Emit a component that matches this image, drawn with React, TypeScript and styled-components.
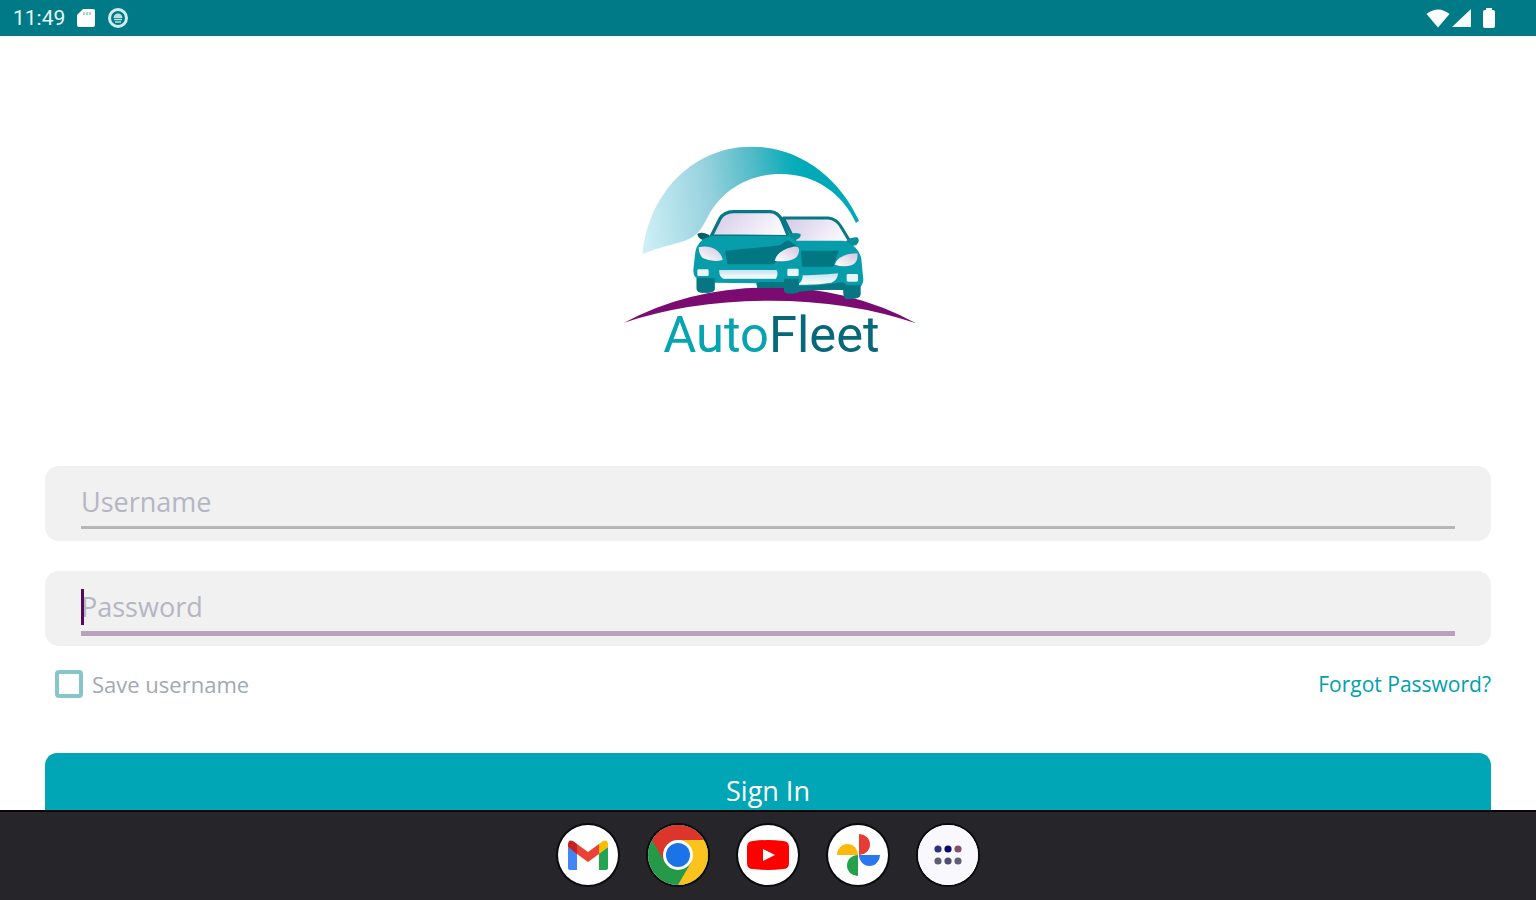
import React, { useState } from "react";
import styled, { createGlobalStyle } from "styled-components";

const GlobalStyle = createGlobalStyle`
  *, *::before, *::after { box-sizing: border-box; }
  body { margin: 0; background: #ffffff; font-family: "Open Sans", "Noto Sans", sans-serif; }
`;

const Screen = styled.div`
  display: flex;
  flex-direction: column;
  height: 100vh;
  overflow: hidden;
`;

const StatusBar = styled.header`
  display: flex;
  align-items: center;
  justify-content: space-between;
  flex: none;
  height: 36px;
  padding: 0 40px 0 13px;
  background: #007a87;
  color: #e6f6f7;
  font: 400 21px/24px Roboto, sans-serif;
`;

const StatusGroup = styled.div<{ $gap: number }>`
  display: flex;
  align-items: center;
  gap: ${(p) => p.$gap}px;
  svg { display: block; }
`;

const Page = styled.main`
  flex: 1;
  min-height: 0;
  overflow: hidden;
  padding: 94px 45px 0;
`;

const Logo = styled.svg`
  display: block;
  width: 320px;
  height: 240px;
  margin: 0 auto 96px;
`;

const Form = styled.form`
  display: flex;
  flex-direction: column;
`;

const Field = styled.div`
  height: 75px;
  margin-bottom: 30px;
  padding: 16px 36px 0;
  border-radius: 14px;
  background: #f1f1f1;
  &:nth-of-type(2) { margin-bottom: 24px; }
`;

const InputLine = styled.div<{ $active?: boolean }>`
  position: relative;
  height: ${(p) => (p.$active ? 49 : 47)}px;
  border-bottom: ${(p) => (p.$active ? "5px solid #b8a2bb" : "3px solid #b7b7b9")};
`;

const Caret = styled.span`
  position: absolute;
  left: 0;
  top: 2px;
  width: 3px;
  height: 36px;
  background: #560a5c;
`;

const TextInput = styled.input`
  display: block;
  width: 100%;
  height: 40px;
  padding: 0;
  border: 0;
  outline: 0;
  background: transparent;
  color: #3c3c4c;
  font: 400 27px/40px "Open Sans", sans-serif;
  &::placeholder { color: #b4b6c3; opacity: 1; }
`;

const Options = styled.div`
  display: flex;
  align-items: center;
  justify-content: space-between;
  height: 28px;
  margin-bottom: 55px;
  padding-left: 10px;
`;

const CheckLabel = styled.label`
  display: flex;
  align-items: center;
  gap: 9px;
  color: #a3a7b8;
  font: 400 22px/28px "Open Sans", sans-serif;
`;

const CheckBox = styled.input`
  appearance: none;
  width: 28px;
  height: 28px;
  margin: 0;
  border: 4px solid #86c5ca;
  border-radius: 4px;
  background: #ffffff;
  &:checked { background: #00a6b6; }
`;

const ForgotLink = styled.a`
  color: #00a0ae;
  font: 400 21px/28px "Open Sans", sans-serif;
  text-decoration: none;
`;

const SignInButton = styled.button`
  height: 76px;
  padding: 0;
  border: 0;
  border-radius: 12px;
  background: #00a6b6;
  color: #ffffff;
  font: 400 27px/36px "Open Sans", sans-serif;
`;

const Dock = styled.nav`
  display: flex;
  align-items: center;
  justify-content: center;
  gap: 30px;
  flex: none;
  height: 90px;
  background: #26252a;
  box-shadow: inset 0 2px 0 #0c0506;
`;

const DockButton = styled.button`
  width: 60px;
  height: 60px;
  padding: 0;
  border: 0;
  border-radius: 50%;
  background: #ffffff;
  box-shadow: 0 0 0 2px #0b0b0d;
  overflow: hidden;
  svg { display: block; width: 60px; height: 60px; }
`;

function AutoFleetLogo() {
  return (
    <Logo viewBox="-6 0 960 720" role="img" aria-label="AutoFleet">
      <defs>
        <linearGradient id="swoosh" x1="98" y1="260" x2="600" y2="200" gradientUnits="userSpaceOnUse">
          <stop offset="0" stopColor="#cdeef5" />
          <stop offset="0.4" stopColor="#97d2de" />
          <stop offset="0.7" stopColor="#4dbac6" />
          <stop offset="0.9" stopColor="#0dadbb" />
          <stop offset="1" stopColor="#00a9b8" />
        </linearGradient>
        <linearGradient id="glass" x1="0" y1="0" x2="1" y2="0.3">
          <stop offset="0" stopColor="#d3c9e6" />
          <stop offset="1" stopColor="#faf8fd" />
        </linearGradient>
        <linearGradient id="lamp" x1="0" y1="1" x2="1" y2="0">
          <stop offset="0" stopColor="#ffffff" />
          <stop offset="1" stopColor="#d2c5e2" />
        </linearGradient>
        <linearGradient id="bumper" x1="0" y1="0" x2="0" y2="1">
          <stop offset="0" stopColor="#c3e3f0" />
          <stop offset="1" stopColor="#ffffff" />
        </linearGradient>
      </defs>
      <path
        d="M98 372C112 205 236 50 425 50C575 50 690 148 747 272L738 279C698 192 618 132 512 132C415 132 340 180 298 252C272 302 262 318 225 332C178 346 138 354 98 372Z"
        fill="url(#swoosh)"
      />
      <path d="M42 578Q240 472 480 472T918 580Q720 512 480 512T42 578Z" fill="#7b0b70" />

      <path d="M520 264H655Q680 266 694 292L722 338L560 345Z" fill="url(#glass)" stroke="#087783" strokeWidth="9" strokeLinejoin="round" />
      <path d="M704 340Q716 320 742 322Q752 332 740 344L718 352Z" fill="#078d99" />
      <path d="M550 332H700Q748 348 754 388L760 450Q758 468 748 472V496Q746 506 726 506H708Q700 504 700 480L566 478Z" fill="#079daa" />
      <path d="M572 362H686L670 410H572Z" fill="#007783" />
      <path d="M674 404Q684 372 742 370Q746 398 724 406Q700 412 674 404Z" fill="url(#lamp)" />
      <path d="M566 436Q620 436 684 430Q684 450 664 458Q620 466 566 464Z" fill="url(#bumper)" />
      <path d="M560 468Q640 468 698 456L710 466H752V494Q750 506 726 506H708Q700 504 700 480Q630 478 560 486Z" fill="#067682" />
      <rect x="710" y="432" width="34" height="23" rx="4" fill="#e8f6fa" />

      <path d="M304 318L330 266Q342 246 370 245H480Q505 246 516 272L536 320Z" fill="url(#glass)" stroke="#087783" strokeWidth="10" strokeLinejoin="round" />
      <path d="M262 312Q275 304 296 314L308 330H278Q264 326 262 312Z" fill="#075f6b" />
      <path d="M532 316Q550 304 572 312Q576 328 544 334Z" fill="#078d99" />
      <path
        d="M302 318H535Q572 336 574 376L578 435Q578 454 566 462V480Q566 490 550 490H534Q522 490 522 474H442L438 460L314 458V478Q312 488 294 488H276Q260 486 260 476V444Q250 440 250 420L256 366Q262 330 302 318Z"
        fill="#079daa"
      />
      <path d="M345 362Q440 354 510 346L532 330Q562 344 567 360L500 392L492 403H352Z" fill="#007783" />
      <path d="M266 352Q296 344 322 362Q338 378 338 390Q308 398 278 384Q266 372 266 352Z" fill="url(#lamp)" />
      <path d="M494 392Q502 360 550 350Q570 348 567 364Q564 388 534 392Q510 396 494 392Z" fill="url(#lamp)" />
      <path d="M328 420H500Q506 434 498 446H340Q326 438 328 420Z" fill="url(#bumper)" />
      <rect x="262" y="418" width="34" height="20" rx="4" fill="#e8f6fa" />
      <rect x="532" y="416" width="34" height="22" rx="4" fill="#e8f6fa" />
      <path d="M260 444H314V478Q312 488 294 488H276Q260 486 260 476Z" fill="#067682" />
      <path d="M442 456H522V446H566V480Q566 490 550 490H534Q522 490 522 474H442Z" fill="#067682" />

      <text x="160" y="665" fontFamily="Roboto, sans-serif" fontSize="152" fill="#06a3b1">
        Auto<tspan fill="#07687a">Fleet</tspan>
      </text>
    </Logo>
  );
}

function Gmail() {
  return (
    <svg viewBox="0 0 60 60" aria-hidden="true">
      <path d="M10 22L19 28V45H12Q10 45 10 43Z" fill="#4285f4" />
      <path d="M41 28L50 22V43Q50 45 48 45H41Z" fill="#23a455" />
      <path d="M41 19L45 16Q50 14 50 20V22L41 29Z" fill="#fbbc04" />
      <path d="M19 19L30 27L41 19V29L30 37L19 29Z" fill="#ea4335" />
      <path d="M10 22V20Q10 14 15 16L19 19V29Z" fill="#c5221f" />
    </svg>
  );
}

function Chrome() {
  return (
    <svg viewBox="0 0 60 60" aria-hidden="true">
      <rect width="60" height="60" fill="#249a48" />
      <path d="M30 15H60V60H30L43 37.5Z" fill="#fcc31e" />
      <path d="M4 15L0 0H60V15H30L17 37.5Z" fill="#dc362c" />
      <circle cx="30" cy="30" r="15" fill="#ffffff" />
      <circle cx="30" cy="30" r="12" fill="#1b73e8" />
    </svg>
  );
}

function YouTube() {
  return (
    <svg viewBox="0 0 60 60" aria-hidden="true">
      <path d="M15 16Q30 14 45 16Q51 16 51 22V38Q51 44 45 44Q30 46 15 44Q9 44 9 38V22Q9 16 15 16Z" fill="#ff0000" />
      <path d="M25 24L37 30L25 36Z" fill="#ffffff" />
    </svg>
  );
}

function Photos() {
  return (
    <svg viewBox="0 0 60 60" aria-hidden="true">
      <path d="M31 30V9A11 10.5 0 0 1 31 30Z" fill="#e53d35" />
      <path d="M31 30H52A10.5 11 0 0 1 31 30Z" fill="#2a78ee" />
      <path d="M30 30V51A11 10.5 0 0 1 30 30Z" fill="#25a04d" />
      <path d="M30 30H9A10.5 11 0 0 1 30 30Z" fill="#fbb90a" />
    </svg>
  );
}

const APP_DOTS = [
  { x: 20, y: 24, fill: "#2b3478" },
  { x: 30, y: 24, fill: "#0a0870" },
  { x: 40, y: 24, fill: "#80506c" },
  { x: 20, y: 36, fill: "#5d5f78" },
  { x: 30, y: 36, fill: "#4e4f72" },
  { x: 40, y: 36, fill: "#5d5c79" },
];

function AllApps() {
  return (
    <svg viewBox="0 0 60 60" aria-hidden="true">
      <rect width="60" height="60" fill="#f9f8fe" />
      {APP_DOTS.map((d) => (
        <circle key={`${d.x}-${d.y}`} cx={d.x} cy={d.y} r="3.6" fill={d.fill} />
      ))}
    </svg>
  );
}

const DOCK_APPS = [
  { name: "Gmail", Icon: Gmail },
  { name: "Chrome", Icon: Chrome },
  { name: "YouTube", Icon: YouTube },
  { name: "Photos", Icon: Photos },
  { name: "All apps", Icon: AllApps },
];

export default function App() {
  const [saved, setSaved] = useState(false);
  return (
    <Screen>
      <GlobalStyle />
      <StatusBar>
        <StatusGroup $gap={12}>
          <span>11:49</span>
          <svg width="18" height="20" viewBox="0 0 18 20" aria-hidden="true">
            <path d="M6 1H16Q18 1 18 3V17Q18 19 16 19H2Q0 19 0 17V7Z" fill="#ffffff" />
            <path d="M7 4V7M10 4V7M13 4V7" stroke="#8cc4c9" strokeWidth="1.5" />
          </svg>
          <svg width="22" height="22" viewBox="0 0 22 22" aria-hidden="true">
            <circle cx="11" cy="11" r="8.5" fill="none" stroke="#d3edef" strokeWidth="3" />
            <path d="M6.5 11Q7 6.500 11 6.500T15.500 11Z" fill="#b9e0e3" />
            <path d="M7 12.500H15M8 15H14" stroke="#b9e0e3" strokeWidth="1.5" />
          </svg>
        </StatusGroup>
        <StatusGroup $gap={2}>
          <svg width="24" height="20" viewBox="0 0 24 20" aria-hidden="true">
            <path d="M12 19.500L0.500 6Q12 -3 23.500 6Z" fill="#ffffff" />
          </svg>
          <svg width="20" height="20" viewBox="0 0 20 20" aria-hidden="true">
            <path d="M19 1V19H0Z" fill="#f4fbfb" />
          </svg>
          <svg width="22" height="22" viewBox="0 0 22 22" aria-hidden="true">
            <path d="M11 3H12V1H18V3H19Q21 3 21 5V19Q21 21 19 21H11Q9 21 9 19V5Q9 3 11 3Z" fill="#ffffff" />
          </svg>
        </StatusGroup>
      </StatusBar>
      <Page>
        <AutoFleetLogo />
        <Form onSubmit={(e) => e.preventDefault()}>
          <Field>
            <InputLine>
              <TextInput type="text" placeholder="Username" aria-label="Username" />
            </InputLine>
          </Field>
          <Field>
            <InputLine $active>
              <TextInput type="password" placeholder="Password" aria-label="Password" />
              <Caret />
            </InputLine>
          </Field>
          <Options>
            <CheckLabel>
              <CheckBox type="checkbox" checked={saved} onChange={(e) => setSaved(e.target.checked)} />
              Save username
            </CheckLabel>
            <ForgotLink href="#forgot">Forgot Password?</ForgotLink>
          </Options>
          <SignInButton type="submit">Sign In</SignInButton>
        </Form>
      </Page>
      <Dock aria-label="Apps">
        {DOCK_APPS.map(({ name, Icon }) => (
          <DockButton key={name} type="button" aria-label={name}>
            <Icon />
          </DockButton>
        ))}
      </Dock>
    </Screen>
  );
}
